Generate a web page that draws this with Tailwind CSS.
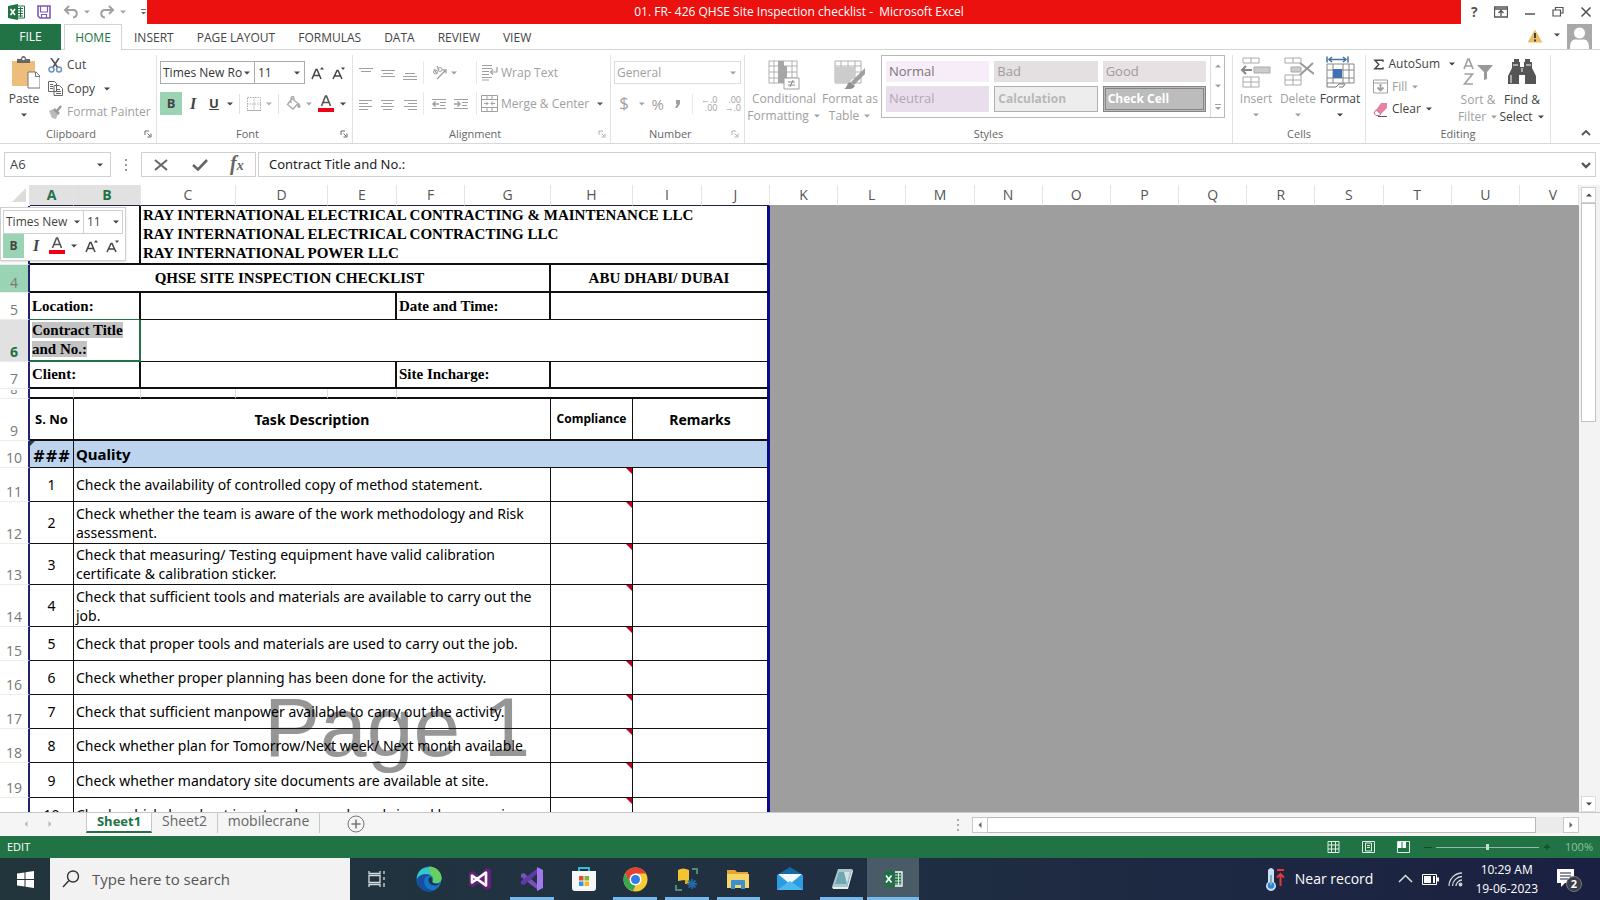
<!DOCTYPE html>
<html lang="en">
<head>
    <meta charset="UTF-8">
    <meta name="viewport" content="width=device-width, initial-scale=1.0">
    <title>01. FR- 426 QHSE Site Inspection checklist - Microsoft Excel</title>
    <script src="https://cdn.jsdelivr.net/npm/@tailwindcss/browser@4"></script>
</head>
<body class="h-screen flex flex-col overflow-hidden bg-white font-['Open_Sans','Noto_Sans',sans-serif] text-xs text-[#444]">

    <!-- Shared icon shapes -->
    <svg class="hidden">
        <symbol id="arrow" viewBox="0 0 8 8"><path d="M1 2.5h6L4 5.5z" fill="currentColor"/></symbol>
        <symbol id="launcher" viewBox="0 0 8 8"><path d="M1 5V1h4M3.5 3.5L6 6M7 3.5V7H3.5" fill="none" stroke="currentColor"/></symbol>
        <symbol id="grow" viewBox="0 0 16 16"><path d="M2 14L6 4.500h1L11 14M3.600 10.500h5.800" fill="none" stroke="currentColor" stroke-width="1.500"/><path d="M10 4.500L12 2l2 2.500z" fill="currentColor"/></symbol>
        <symbol id="shrink" viewBox="0 0 16 16"><path d="M2 14L6 5.500h1L11 14M3.600 11h5.800" fill="none" stroke="currentColor" stroke-width="1.500"/><path d="M10 2.500h4L12 5z" fill="currentColor"/></symbol>
        <symbol id="fontcolor" viewBox="0 0 18 18"><path d="M4.500 11L8.500 1h1L13.500 11M6 7.500h6" fill="none" stroke="#555" stroke-width="1.600"/><path d="M1 13h16v4H1z" fill="#f00014"/></symbol>
    </svg>

    <!-- Title bar -->
    <header class="flex h-6 shrink-0">
        <div class="flex w-[147px] items-center pl-2 text-[#a0a0a0]">
            <svg class="mr-3 h-4 w-[17px]" viewBox="0 0 17 16"><path d="M8 2h8.500v12H8z" fill="#fff" stroke="#217346"/><path d="M10 4.500h5M10 7h5M10 9.500h5M10 12h5M12.500 3v10" stroke="#217346"/><path d="M0 2l10-2v16L0 14z" fill="#217346"/><path d="M2.500 5l4.500 6M7 5l-4.500 6" stroke="#fff" stroke-width="1.600"/></svg>
            <button aria-label="Save"><svg class="size-[14px]" viewBox="0 0 14 14"><path d="M1 1h12v12H3l-2-2z" fill="#fff" stroke="#7d5ab5" stroke-width="1.600"/><path d="M3.500 1v6h7V1M4.500 13V9.500h5V13" fill="none" stroke="#7d5ab5" stroke-width="1.200"/></svg></button>
            <button class="ml-3 flex items-center gap-1" aria-label="Undo"><svg class="size-4" viewBox="0 0 16 16"><path d="M6 2L2 6l4 4M2.500 6H10c5 0 5 7 0 7.500" fill="none" stroke="currentColor" stroke-width="2"/></svg><svg class="size-2"><use href="#arrow"/></svg></button>
            <button class="ml-2 flex items-center gap-1" aria-label="Redo"><svg class="size-4" viewBox="0 0 16 16"><path d="M10 2l4 4-4 4M13.500 6H6c-5 0-5 7 0 7.500" fill="none" stroke="currentColor" stroke-width="2"/></svg><svg class="size-2"><use href="#arrow"/></svg></button>
            <button class="ml-3 text-[#666]" aria-label="Customize toolbar"><svg class="size-2" viewBox="0 0 8 8"><path d="M2 1.500h5" stroke="currentColor"/><path d="M2 4h5L4.500 6.500z" fill="currentColor"/></svg></button>
        </div>
        <h1 class="flex flex-1 items-center justify-center whitespace-pre bg-[#ea110f] pr-[10px] text-xs text-white">01. FR- 426 QHSE Site Inspection checklist -  Microsoft Excel</h1>
        <div class="flex w-[139px] items-center justify-between pr-2 pl-[10px] text-[#555]">
            <button class="text-sm font-bold" aria-label="Help">?</button>
            <button aria-label="Ribbon options"><svg class="h-3 w-[14px]" viewBox="0 0 14 12" fill="none" stroke="currentColor"><path d="M.5 1h13v10H.5zM.5 3h13M7 10V5M4.500 7L7 4.500 9.500 7" stroke-width="1.300"/></svg></button>
            <button aria-label="Minimize"><svg class="size-3" viewBox="0 0 12 12"><path d="M1 8h10" stroke="currentColor" stroke-width="1.500"/></svg></button>
            <button aria-label="Restore"><svg class="size-3" viewBox="0 0 12 12" fill="none" stroke="currentColor" stroke-width="1.200"><path d="M1 4h7.500v6H1zM3.500 4V1.500H11V7H8.500"/></svg></button>
            <button aria-label="Close"><svg class="size-3" viewBox="0 0 12 12"><path d="M1.500 1.500l9 9M10.500 1.500l-9 9" stroke="currentColor" stroke-width="1.600"/></svg></button>
        </div>
    </header>

    <!-- Ribbon tabs -->
    <nav class="flex h-[26px] shrink-0 border-b border-[#d4d4d4]">
        <button class="h-[26px] w-[61px] bg-[#217346] text-white">FILE</button>
        <button class="ml-[3px] h-[26px] w-[58px] border-x border-t border-[#d4d4d4] bg-white text-[#217346]">HOME</button>
        <button class="pt-[2px] pl-3 pr-[11px]">INSERT</button>
        <button class="pt-[2px] pl-3 pr-[11px]">PAGE LAYOUT</button>
        <button class="pt-[2px] pl-3 pr-[11px]">FORMULAS</button>
        <button class="pt-[2px] pl-3 pr-[11px]">DATA</button>
        <button class="pt-[2px] pl-3 pr-[11px]">REVIEW</button>
        <button class="pt-[2px] pl-3 pr-[11px]">VIEW</button>
        <div class="ml-auto flex items-end gap-[6px] pr-2">
            <svg class="mr-1 mb-[6px] h-[14px] w-4" viewBox="0 0 16 14"><path d="M8 .5L15.500 13.500H.5z" fill="#edbd66"/><path d="M8 4v5M8 10.500v2" stroke="#333" stroke-width="1.800"/></svg>
            <svg class="mb-[10px] size-2"><use href="#arrow"/></svg>
            <svg class="h-[25px] w-[25px]" viewBox="0 0 25 25"><path d="M0 0h25v25H0z" fill="#a9a9a9"/><path d="M3 25c0-6 1-9 5-9.500h9c4 .5 5 3.500 5 9.500z" fill="#fff"/><circle cx="12.500" cy="9" r="6" fill="#fff" stroke="#a9a9a9"/></svg>
        </div>
    </nav>

    <!-- Ribbon -->
    <section class="flex h-[94px] shrink-0 border-b border-[#d8d8d8] pt-[5px]">
        <!-- Clipboard -->
        <div class="flex w-[157px] flex-col border-r border-[#e2e2e2]">
            <div class="flex h-[70px]">
                <button class="flex w-[48px] flex-col items-center">
                    <svg class="h-9 w-8" viewBox="0 0 32 36"><path d="M4 6h23v25H4z" fill="#edbe7b"/><path d="M9 8V4h4c0-4 5-4 5 0h4v4z" fill="#666"/><circle cx="15.500" cy="4" r="1.300" fill="#fff"/><path d="M20 17h8l4 4v12H20z" fill="#fff" stroke="#777"/><path d="M27.500 17v4.500H32" fill="none" stroke="#777"/></svg>
                    <span class="leading-4">Paste</span>
                    <svg class="mt-1 size-2"><use href="#arrow"/></svg>
                </button>
                <div class="flex flex-col justify-between pb-[3px]">
                    <button class="flex h-5 items-center gap-1"><svg class="size-[15px]" viewBox="0 0 15 15" fill="none"><path d="M3 0l7 10M11 0L4.500 10" stroke="#555" stroke-width="1.600"/><circle cx="3.500" cy="11.500" r="2.500" stroke="#6f93c4" stroke-width="1.500"/><circle cx="11" cy="11.500" r="2.500" stroke="#6f93c4" stroke-width="1.500"/></svg>Cut</button>
                    <button class="flex h-5 items-center gap-1"><svg class="size-[15px]" viewBox="0 0 15 15" fill="#fff" stroke="#666"><path d="M.5.5h6l2 2v8h-8zM6 4.500h5.500l3 3v7H6z"/><path d="M2 3.500h3M2 5.500h3M2 7.500h3M8 8.500h4M8 10.500h5M8 12.500h5"/></svg>Copy<svg class="ml-1 size-2"><use href="#arrow"/></svg></button>
                    <button class="flex h-5 items-center gap-1 whitespace-nowrap text-[#a0a0a0]"><svg class="size-[15px]" viewBox="0 0 15 15"><path d="M1 6l4-2 5 5-2 5-4-1z" fill="#bbb"/><path d="M6 4l5 5M9 6l4-5" stroke="#999" stroke-width="2.500"/></svg>Format Painter</button>
                </div>
            </div>
            <div class="flex h-[18px] items-center justify-between pr-1 pl-[46px] text-[11px] text-[#666]">Clipboard<svg class="size-2"><use href="#launcher"/></svg></div>
        </div>
        <!-- Font -->
        <div class="flex w-[196px] flex-col border-r border-[#e2e2e2] pl-[3px]">
            <div class="flex h-[70px] flex-col gap-2 pt-[6px]">
                <div class="flex h-[23px] items-center">
                    <label class="relative flex h-full w-[95px] items-center border border-[#ababab]"><select aria-label="Font" class="w-full appearance-none pl-[2px] text-xs text-[#333]"><option>Times New Ro</option></select><svg class="absolute right-[3px] size-2"><use href="#arrow"/></svg></label>
                    <label class="relative flex h-full w-[50px] items-center border border-l-0 border-[#ababab]"><select aria-label="Font size" class="w-full appearance-none pl-[3px] text-xs text-[#333]"><option>11</option></select><svg class="absolute right-[3px] size-2"><use href="#arrow"/></svg></label>
                    <button class="ml-[5px]" aria-label="Grow font"><svg class="size-4"><use href="#grow"/></svg></button>
                    <button class="ml-[5px]" aria-label="Shrink font"><svg class="size-4"><use href="#shrink"/></svg></button>
                </div>
                <div class="flex h-[23px] items-center">
                    <button class="h-full w-[22px] bg-[#9bd4b4] text-[13px] font-bold">B</button>
                    <button class="w-[22px] font-['Liberation_Serif',serif] text-base font-bold italic">I</button>
                    <button class="w-5 text-[13px] font-bold underline">U</button>
                    <svg class="ml-[2px] size-2"><use href="#arrow"/></svg>
                    <span class="ml-[5px] h-5 w-px bg-[#e0e0e0]"></span>
                    <button class="ml-[7px] flex items-center gap-1 text-[#b0b0b0]" aria-label="Borders"><svg class="size-[14px]" viewBox="0 0 14 14" fill="none" stroke="currentColor"><path d="M.5.5h13v13H.5zM7 0v14M0 7h14" stroke-dasharray="1.500 1"/><path d="M0 13.500h14"/></svg><svg class="size-2"><use href="#arrow"/></svg></button>
                    <span class="ml-[5px] h-5 w-px bg-[#e0e0e0]"></span>
                    <button class="ml-[7px] flex items-center gap-1 text-[#a8a8a8]" aria-label="Fill color"><svg class="size-[15px]" viewBox="0 0 15 15" fill="none" stroke="currentColor"><path d="M6 2.500l6 5-5 5.500-5.500-4.500zM5 7V2c0-2 3-2 3 0v3" stroke-width="1.300"/><path d="M12.500 7c2 3 2 4.500.5 4.500s-1.500-1.500-.5-4.500z" fill="currentColor"/></svg><svg class="size-2"><use href="#arrow"/></svg></button>
                    <button class="ml-1 flex items-center gap-1" aria-label="Font color"><svg class="size-[18px]"><use href="#fontcolor"/></svg><svg class="size-2"><use href="#arrow"/></svg></button>
                </div>
            </div>
            <div class="flex h-[18px] items-center justify-between pr-1 pl-[76px] text-[11px] text-[#666]">Font<svg class="size-2"><use href="#launcher"/></svg></div>
        </div>
        <!-- Alignment -->
        <div class="flex w-[258px] flex-col border-r border-[#e2e2e2] pl-[6px] text-[#a0a0a0]">
            <div class="grid h-[70px] grid-cols-[65px_53px_1fr] content-start gap-y-2 pt-[6px]">
                <div class="flex h-[23px] items-center gap-2 border-r border-[#e8e8e8]">
                    <button aria-label="Top align"><svg class="size-[14px]" viewBox="0 0 14 14" stroke="currentColor"><path d="M0 2.500h14M2 5.500h10"/></svg></button>
                    <button aria-label="Middle align"><svg class="size-[14px]" viewBox="0 0 14 14" stroke="currentColor"><path d="M0 4.500h14M2 7.500h10M0 10.500h14"/></svg></button>
                    <button aria-label="Bottom align"><svg class="size-[14px]" viewBox="0 0 14 14" stroke="currentColor"><path d="M2 7.500h10M0 10.500h14M0 13.500h14"/></svg></button>
                </div>
                <div class="flex items-center gap-[2px] border-r border-[#e8e8e8] pl-2">
                    <button aria-label="Orientation"><svg class="size-4" viewBox="0 0 16 16" fill="none" stroke="currentColor"><circle cx="3.500" cy="7" r="2"/><circle cx="8" cy="4.500" r="2"/><path d="M5 9L2 4M7 5L5 1M5 14l9-9M10.500 5H14v3.500" stroke-width="1.300"/></svg></button><svg class="size-2"><use href="#arrow"/></svg>
                </div>
                <button class="flex items-center gap-[3px] pl-[4px]"><svg class="size-[17px]" viewBox="0 0 17 17" fill="none" stroke="currentColor"><path d="M1 1.500h10M1 4.500h10M1 7.500h7M1 10.500h7M1 13.500h10M1 16h7M16 3v5H9.500M12 5.500L9.500 8l2.500 2.500" stroke-width="1.200"/></svg>Wrap Text</button>
                <div class="flex h-[23px] items-center gap-2 border-r border-[#e8e8e8]">
                    <button aria-label="Align left"><svg class="size-[14px]" viewBox="0 0 14 14" stroke="currentColor"><path d="M0 3.500h13M0 6.500h9M0 9.500h13M0 12.500h9"/></svg></button>
                    <button aria-label="Center"><svg class="size-[14px]" viewBox="0 0 14 14" stroke="currentColor"><path d="M0 3.500h13M2 6.500h9M0 9.500h13M2 12.500h9"/></svg></button>
                    <button aria-label="Align right"><svg class="size-[14px]" viewBox="0 0 14 14" stroke="currentColor"><path d="M1 3.500h13M5 6.500h9M1 9.500h13M5 12.500h9"/></svg></button>
                </div>
                <div class="flex items-center gap-[6px] border-r border-[#e8e8e8] pl-[7px]">
                    <button aria-label="Decrease indent"><svg class="size-4" viewBox="0 0 16 16" fill="none" stroke="currentColor"><path d="M1 3.500h14M9 6.500h6M9 9.500h5M1 12.500h14"/><path d="M8 8H2M4.500 5.500L2 8l2.500 2.500" stroke-width="1.500"/></svg></button>
                    <button aria-label="Increase indent"><svg class="size-4" viewBox="0 0 16 16" fill="none" stroke="currentColor"><path d="M1 3.500h14M9 6.500h6M9 9.500h5M1 12.500h14"/><path d="M1 8h6M4.500 5.500L7 8l-2.500 2.500" stroke-width="1.500"/></svg></button>
                </div>
                <button class="flex items-center gap-[3px] whitespace-nowrap pl-[4px]"><svg class="size-[17px]" viewBox="0 0 17 17" fill="none" stroke="currentColor"><path d="M.5.5h16v16H.5zM.5 4.500h16M.5 12.500h16M6 0v4.500M11 0v4.500M6 12.500V17M11 12.500V17M3 8.500h4M10 8.500h4M5 6.500l2 2-2 2M12 6.500l-2 2 2 2"/></svg>Merge &amp; Center<svg class="ml-1 size-2 text-[#555]"><use href="#arrow"/></svg></button>
            </div>
            <div class="flex h-[18px] items-center justify-between pr-1 pl-[90px] text-[11px] text-[#666]">Alignment<svg class="size-2 text-[#b0b0b0]"><use href="#launcher"/></svg></div>
        </div>
        <!-- Number -->
        <div class="flex w-[134px] flex-col border-r border-[#e2e2e2] px-[3px] text-[#a0a0a0]">
            <div class="flex h-[70px] flex-col gap-2 pt-[6px]">
                <label class="relative flex h-[23px] items-center border border-[#dcdcdc]"><select aria-label="Number format" class="w-full appearance-none pl-[2px] text-xs"><option>General</option></select><svg class="absolute right-[3px] size-2"><use href="#arrow"/></svg></label>
                <div class="flex h-[23px] items-center">
                    <button class="w-[21px] text-[17px]">$</button><svg class="ml-1 size-2"><use href="#arrow"/></svg>
                    <button class="ml-[6px] text-[15px]">%</button>
                    <button class="ml-[10px]" aria-label="Comma style"><svg class="h-3 w-2" viewBox="0 0 8 12"><path d="M2 2h4v4L3 10H1l2-4H2z" fill="currentColor"/></svg></button>
                    <span class="ml-[10px] h-5 w-px bg-[#e8e8e8]"></span>
                    <button class="ml-2 text-right text-[9px] leading-[8px]"><b>←</b>.0<br>.00</button>
                    <button class="ml-[7px] text-right text-[9px] leading-[8px]">.00<br><b>→</b>.0</button>
                </div>
            </div>
            <div class="flex h-[18px] items-center justify-between pr-[2px] pl-[35px] text-[11px] text-[#666]">Number<svg class="size-2 text-[#b0b0b0]"><use href="#launcher"/></svg></div>
        </div>
        <!-- Styles -->
        <div class="flex w-[488px] flex-col border-r border-[#e2e2e2] text-[#a0a0a0]">
            <div class="flex h-[70px]">
                <button class="flex w-[74px] flex-col items-center pt-[5px] pl-1 leading-[17px]">
                    <svg class="h-[30px] w-8 shrink-0" viewBox="0 0 32 30"><path d="M1 1h28v22H1zM1 6h28M1 12h28M1 18h28M6 1v22M24 1v22" fill="#fff" stroke="#b0b0b0"/><path d="M10 1h6v22h-6zM16 6h3v14h-3z" fill="#a6a6a6"/><path d="M16 18h15v11H16z" fill="#fff" stroke="#a0a0a0"/><path d="M20 22h7M20 25h7M25 20l-3 7" stroke="#888"/></svg>
                    <span>Conditional</span><span class="flex items-center gap-1">Formatting<svg class="size-2"><use href="#arrow"/></svg></span>
                </button>
                <button class="flex w-[62px] flex-col items-center whitespace-nowrap pt-[5px] leading-[17px]">
                    <svg class="h-[30px] w-8 shrink-0" viewBox="0 0 32 30"><path d="M1 1h26v22H1zM1 6h26M1 12h26M1 18h26M7 1v22M14 1v22M21 1v22" fill="#fff" stroke="#b0b0b0"/><path d="M1 7h20v9l-6 7H1z" fill="#ccc"/><path d="M31 8v6L20 25l-3-3z" fill="#a0a0a0"/><path d="M16 22l5 4c-2 4-7 3-11 3 3-1 3-6 6-7z" fill="#909090"/></svg>
                    <span>Format as</span><span class="flex items-center gap-1">Table<svg class="size-2"><use href="#arrow"/></svg></span>
                </button>
                <div class="flex h-[63px] w-[344px] border border-[#b8b8b8]">
                    <div class="grid flex-1 grid-cols-3 gap-x-[5px] gap-y-[4px] px-1 py-[5px] text-[13px]">
                        <button class="bg-[#f6edf8] pl-[3px] text-left text-[#777]">Normal</button>
                        <button class="bg-[#e4dfe1] pl-[3px] text-left text-[#a29a9c]">Bad</button>
                        <button class="bg-[#e7e1e3] pl-[3px] text-left text-[#a29a9c]">Good</button>
                        <button class="bg-[#e9dfec] pl-[3px] text-left text-[#b3a6b6]">Neutral</button>
                        <button class="border border-[#b0b0b0] bg-[#ededed] pl-[3px] text-left text-xs font-bold text-[#b8b8b8]">Calculation</button>
                        <button class="border-3 border-double border-[#858585] bg-[#bcbcbc] pl-[2px] text-left text-xs font-bold leading-4 text-white">Check Cell</button>
                    </div>
                    <div class="flex w-[14px] flex-col items-center justify-around border-l border-[#dcdcdc]"><svg class="size-2 rotate-180"><use href="#arrow"/></svg><svg class="size-2"><use href="#arrow"/></svg><svg class="size-2" viewBox="0 0 8 8"><path d="M1 1.500h6" stroke="currentColor"/><path d="M1 4h6L4 7z" fill="currentColor"/></svg></div>
                </div>
            </div>
            <div class="flex h-[18px] items-center justify-center text-[11px] text-[#666]">Styles</div>
        </div>
        <!-- Cells -->
        <div class="flex w-[133px] flex-col border-r border-[#e2e2e2] text-[#a0a0a0]">
            <div class="grid h-[70px] grid-cols-[42px_42px_42px] pl-[2px]">
                <button class="flex flex-col items-center"><svg class="h-9 w-8" viewBox="0 0 32 36" fill="none" stroke="#aaa"><path d="M3 3h16v5H3zM11 3v5M3 22h16v10H3zM11 22v10M3 27h16"/><path d="M14 12h16v6H14z" fill="#ccc"/><path d="M12 15H2M6 11l-4 4 4 4" stroke="#888" stroke-width="2"/></svg><span class="leading-4">Insert</span><svg class="mt-1 size-2"><use href="#arrow"/></svg></button>
                <button class="flex flex-col items-center"><svg class="h-9 w-8" viewBox="0 0 32 36" fill="none" stroke="#aaa"><path d="M3 3h16v5H3zM11 3v5M3 20h16v10H3zM11 20v10M3 25h16"/><path d="M9 12h10v5H9z" fill="#ccc"/><path d="M18 8l14 11M31 8L18 20" stroke="#999" stroke-width="2"/></svg><span class="leading-4">Delete</span><svg class="mt-1 size-2"><use href="#arrow"/></svg></button>
                <button class="flex flex-col items-center text-[#444]"><svg class="h-9 w-8" viewBox="0 0 32 36" fill="none" stroke="#888"><path d="M3 9h27v19H3zM3 15h27M3 23h27M9 9v19M19 9v19M25 9v19"/><path d="M9 14h9v9H9z" fill="#3e72b4" stroke="none"/><path d="M3 1.500v6M24 1.500v6M5 4.500h17M8 2L5 4.500 8 7M19 2l3 2.500L19 7" stroke="#41719c" stroke-width="1.500"/><path d="M3 28v4h9l3-3h6l-2 3h-4" stroke="#777"/></svg><span class="leading-4">Format</span><svg class="mt-1 size-2"><use href="#arrow"/></svg></button>
            </div>
            <div class="flex h-[18px] items-center justify-center text-[11px] text-[#666]">Cells</div>
        </div>
        <!-- Editing -->
        <div class="flex w-[185px] flex-col border-r border-[#e2e2e2]">
            <div class="flex h-[70px]">
                <div class="flex w-[90px] flex-col justify-between pb-[7px] pl-[7px]">
                    <button class="flex h-[18px] items-center gap-1"><svg class="size-[15px]" viewBox="0 0 15 15"><path d="M13 4V2H2.500l5 5.500-5 5.500H13v-2" fill="none" stroke="#444" stroke-width="1.900"/></svg>AutoSum<svg class="ml-1 size-2 shrink-0"><use href="#arrow"/></svg></button>
                    <button class="flex h-[18px] items-center gap-1 text-[#a0a0a0]"><svg class="size-[15px]" viewBox="0 0 15 15" fill="none" stroke="currentColor"><path d="M.5 1h14v13H.5zM.5 4h14"/><path d="M7.500 5v6M4.500 8.500l3 3 3-3" stroke-width="1.800"/></svg>Fill<svg class="size-2"><use href="#arrow"/></svg></button>
                    <button class="flex h-[18px] items-center gap-1"><svg class="size-[15px]" viewBox="0 0 15 15"><path d="M8 1h6v5l-6 6-5-4z" fill="#e683a5"/><path d="M3 8l5 4-2 1.500H3L1 11z" fill="#fff" stroke="#c67"/><path d="M5 14.500h9" stroke="#555"/></svg>Clear<svg class="size-2"><use href="#arrow"/></svg></button>
                </div>
                <button class="flex w-[44px] flex-col items-center whitespace-nowrap leading-[17px] text-[#a0a0a0]">
                    <svg class="h-9 w-8" viewBox="0 0 32 36" fill="none" stroke="currentColor" stroke-width="1.700"><path d="M2 14L6 4h1l4 10M3.500 11h6M2.500 19h8L2.500 29h8.500"/><path d="M15 10h16l-6 7v7l-3 1v-8z" fill="#999" stroke="none"/></svg>
                    <span>Sort &amp;</span><span class="flex items-center gap-1">Filter<svg class="size-2"><use href="#arrow"/></svg></span>
                </button>
                <button class="flex w-[44px] flex-col items-center whitespace-nowrap leading-[17px]">
                    <svg class="h-9 w-8" viewBox="0 0 32 36" fill="#555"><path d="M8 4h5v3h1v5h4V7h1V4h5v3h2v6l4 8v8H19v-9h-6v9H2v-8l4-8V7h2z"/><path d="M7 10h5M20 10h5M5 20v8M16 13v4" stroke="#fff" stroke-width="1"/></svg>
                    <span>Find &amp;</span><span class="flex items-center gap-1">Select<svg class="size-2"><use href="#arrow"/></svg></span>
                </button>
            </div>
            <div class="flex h-[18px] items-center justify-center text-[11px] text-[#666]">Editing</div>
        </div>
        <button class="ml-auto self-end pr-2 pb-1" aria-label="Collapse ribbon"><svg class="size-3" viewBox="0 0 12 12"><path d="M2 8l4-4 4 4" fill="none" stroke="#555" stroke-width="1.800"/></svg></button>
    </section>

    <!-- Formula bar -->
    <section class="flex h-[41px] shrink-0 items-start pt-2 pr-1 pl-1">
        <label class="relative flex h-[25px] w-[107px] items-center border border-[#d0d0d0]"><input aria-label="Name box" value="A6" class="w-full pl-[5px] text-[13px]"><svg class="absolute right-[6px] size-2"><use href="#arrow"/></svg></label>
        <svg class="mx-[11px] h-[25px] w-2" viewBox="0 0 8 25" fill="#999"><path d="M3 7h2v2H3zM3 12h2v2H3zM3 17h2v2H3z"/></svg>
        <div class="flex h-[25px] w-[115px] items-center justify-around border border-[#d0d0d0] text-[#666]">
            <button aria-label="Cancel"><svg class="h-3 w-4" viewBox="0 0 16 12"><path d="M2 1l12 10M14 1L2 11" stroke="currentColor" stroke-width="2"/></svg></button>
            <button aria-label="Enter"><svg class="h-3 w-4" viewBox="0 0 16 12"><path d="M1 6l5 4.500L15 1" fill="none" stroke="currentColor" stroke-width="2.600"/></svg></button>
            <button class="font-['Liberation_Serif',serif] text-xl font-bold italic leading-none">f<span class="text-sm">x</span></button>
        </div>
        <label class="relative ml-[2px] flex h-[25px] flex-1 items-center border border-[#d0d0d0]"><input aria-label="Formula" value="Contract Title and No.:" class="w-full pl-[10px] font-['Noto_Sans',sans-serif] text-[13px] text-[#222]"><svg class="absolute right-[3px] size-3" viewBox="0 0 12 12"><path d="M2 4l4 4 4-4" fill="none" stroke="#555" stroke-width="2.400"/></svg></label>
    </section>

    <!-- Worksheet -->
    <main class="flex min-h-0 flex-1">
        <div class="relative isolate min-w-0 flex-1 overflow-hidden bg-white">
            <div class="absolute top-[494px] left-[264px] -z-10 font-['Liberation_Sans',sans-serif] text-[84px] leading-[96px] text-[#969696]" aria-hidden="true">Page 1</div>
            <table class="w-full table-fixed border-separate border-spacing-0 font-['Noto_Sans',sans-serif] text-sm leading-[19px] text-black">
                <colgroup>
                    <col class="w-[30px]"><col class="w-[44px]"><col class="w-[67px]"><col class="w-[95px]"><col class="w-[92px]"><col class="w-[69px]"><col class="w-[68px]"><col class="w-[86px]"><col class="w-[82px]"><col class="w-[69px]"><col class="w-[68px]">
                    <col><col><col><col><col><col><col><col><col><col><col><col class="w-[59px]">
                </colgroup>
                <thead class="font-['Open_Sans',sans-serif] text-sm text-[#555]">
                    <tr class="h-5 [&>th]:border-r [&>th]:border-b [&>th]:border-r-[#e4e4e4] [&>th]:border-b-[#22224e] [&>th]:p-0 [&>th]:font-normal">
                        <th class="border-b-transparent!"><svg class="ml-3 h-4 w-[14px]" viewBox="0 0 14 16"><path d="M14 1v14H0z" fill="#dcdcdc"/></svg></th>
                        <th class="border-b-2 bg-[#e0e1e0] font-bold! text-[#217346]">A</th>
                        <th class="border-b-2 bg-[#e0e1e0] font-bold! text-[#217346]">B</th>
                        <th>C</th><th>D</th><th>E</th><th>F</th><th>G</th><th>H</th><th>I</th><th>J</th>
                        <th class="border-b-[#9e9e9e]!">K</th><th class="border-b-[#9e9e9e]!">L</th><th class="border-b-[#9e9e9e]!">M</th><th class="border-b-[#9e9e9e]!">N</th><th class="border-b-[#9e9e9e]!">O</th><th class="border-b-[#9e9e9e]!">P</th><th class="border-b-[#9e9e9e]!">Q</th><th class="border-b-[#9e9e9e]!">R</th><th class="border-b-[#9e9e9e]!">S</th><th class="border-b-[#9e9e9e]!">T</th><th class="border-b-[#9e9e9e]!">U</th><th class="border-b-[#9e9e9e]! pl-2!">V</th>
                    </tr>
                </thead>
                <tbody class="[&_td]:border-[#111] [&_td]:p-0 [&_th]:border-r-2 [&_th]:border-b [&_th]:border-r-[#22226e] [&_th]:border-b-[#ececec] [&_th]:p-0 [&_th]:align-bottom [&_th]:font-['Open_Sans',sans-serif] [&_th]:text-sm [&_th]:font-normal [&_th]:leading-[18px] [&_th]:text-[#777]">
                    <tr class="h-[59px] font-['Liberation_Serif',serif] text-[15px] font-bold">
                        <th></th>
                        <td colspan="2" class="border-r-2 border-b-2"></td>
                        <td colspan="8" class="border-b-2 border-r-3 border-r-[#0a0a8c]! pl-[2px]!">RAY INTERNATIONAL ELECTRICAL CONTRACTING &amp; MAINTENANCE LLC<br>RAY INTERNATIONAL ELECTRICAL CONTRACTING LLC<br>RAY INTERNATIONAL POWER LLC</td>
                        <td colspan="12" rowspan="16" class="bg-[#9e9e9e]"></td>
                    </tr>
                    <tr class="h-7 font-['Liberation_Serif',serif] text-[15px] font-bold">
                        <th class="bg-[#9bd4b4]">4</th>
                        <td colspan="7" class="border-r-2 border-b-2 text-center">QHSE SITE INSPECTION CHECKLIST</td>
                        <td colspan="3" class="border-b-2 border-r-3 border-r-[#0a0a8c]! text-center">ABU DHABI/ DUBAI</td>
                    </tr>
                    <tr class="h-[27px] font-['Liberation_Serif',serif] text-[15px] font-bold">
                        <th>5</th>
                        <td colspan="2" class="border-r-2 border-b border-b-[#217346]! pl-[2px]!">Location:</td>
                        <td colspan="3" class="border-r-2 border-b"></td>
                        <td colspan="2" class="border-r-2 border-b pl-[2px]!">Date and Time:</td>
                        <td colspan="3" class="border-b border-r-3 border-r-[#0a0a8c]!"></td>
                    </tr>
                    <tr class="h-[42px] font-['Liberation_Serif',serif] text-[15px] font-bold">
                        <th class="bg-[#e0e1e0] font-bold! text-[#217346]!">6</th>
                        <td colspan="2" class="border-r-2 border-b-2 border-[#217346]! pl-[2px]!"><span class="bg-[#c3c3c3]">Contract Title </span><br><span class="bg-[#c3c3c3]">and No.:</span></td>
                        <td colspan="8" class="border-b border-r-3 border-r-[#0a0a8c]!"></td>
                    </tr>
                    <tr class="h-[27px] font-['Liberation_Serif',serif] text-[15px] font-bold">
                        <th>7</th>
                        <td colspan="2" class="border-r-2 border-b-2 pl-[2px]!">Client:</td>
                        <td colspan="3" class="border-r-2 border-b-2"></td>
                        <td colspan="2" class="border-r-2 border-b-2 pl-[2px]!">Site Incharge:</td>
                        <td colspan="3" class="border-b-2 border-r-3 border-r-[#0a0a8c]!"></td>
                    </tr>
                    <tr class="h-[10px]">
                        <th><div class="flex h-2 items-end justify-center overflow-hidden text-xs">8</div></th>
                        <td class="border-r border-b-2 border-r-[#e0e0e0]!"></td><td class="border-r border-b-2 border-r-[#e0e0e0]!"></td><td class="border-r border-b-2 border-r-[#e0e0e0]!"></td><td class="border-r border-b-2 border-r-[#e0e0e0]!"></td><td class="border-r border-b-2 border-r-[#e0e0e0]!"></td><td class="border-b-2"></td>
                        <td class="border-b-2"></td><td class="border-b-2"></td><td class="border-b-2"></td>
                        <td class="border-b-2 border-r-3 border-r-[#0a0a8c]!"></td>
                    </tr>
                    <tr class="h-[42px] text-center font-bold">
                        <th>9</th>
                        <td class="border-r border-b-2 text-[13px]">S. No</td>
                        <td colspan="6" class="border-r border-b-2">Task Description</td>
                        <td class="border-r border-b-2 text-xs">Compliance</td>
                        <td colspan="2" class="border-b-2 border-r-3 border-r-[#0a0a8c]!">Remarks</td>
                    </tr>
                    <tr class="h-[27px] bg-[#bdd4ee] font-bold">
                        <th class="bg-white">10</th>
                        <td class="relative border-r border-b pt-[6px]! text-center font-['DejaVu_Sans',sans-serif] text-[15px]"><svg class="absolute top-0 left-0 size-[5px]" viewBox="0 0 5 5"><path d="M0 0h5L0 5z" fill="#1c4a3c"/></svg>###</td>
                        <td colspan="9" class="border-b border-r-3 border-r-[#0a0a8c]! pl-[2px]! text-[15px]">Quality</td>
                    </tr>
                    <tr class="h-[34px]">
                        <th>11</th><td class="border-r border-b text-center">1</td>
                        <td colspan="6" class="border-r border-b pl-[2px]!">Check the availability of controlled copy of method statement.</td>
                        <td class="relative border-r border-b"><svg class="absolute top-0 right-0 size-[6px]" viewBox="0 0 6 6"><path d="M0 0h6v6z" fill="#c00020"/></svg></td>
                        <td colspan="2" class="border-b border-r-3 border-r-[#0a0a8c]!"></td>
                    </tr>
                    <tr class="h-[42px]">
                        <th>12</th><td class="border-r border-b text-center">2</td>
                        <td colspan="6" class="border-r border-b pl-[2px]!">Check whether the team is aware of the work methodology and Risk<br>assessment.</td>
                        <td class="relative border-r border-b"><svg class="absolute top-0 right-0 size-[6px]" viewBox="0 0 6 6"><path d="M0 0h6v6z" fill="#c00020"/></svg></td>
                        <td colspan="2" class="border-b border-r-3 border-r-[#0a0a8c]!"></td>
                    </tr>
                    <tr class="h-[41px]">
                        <th>13</th><td class="border-r border-b text-center">3</td>
                        <td colspan="6" class="border-r border-b pl-[2px]!">Check that measuring/ Testing equipment have valid calibration<br>certificate &amp; calibration sticker.</td>
                        <td class="relative border-r border-b"><svg class="absolute top-0 right-0 size-[6px]" viewBox="0 0 6 6"><path d="M0 0h6v6z" fill="#c00020"/></svg></td>
                        <td colspan="2" class="border-b border-r-3 border-r-[#0a0a8c]!"></td>
                    </tr>
                    <tr class="h-[42px]">
                        <th>14</th><td class="border-r border-b text-center">4</td>
                        <td colspan="6" class="border-r border-b pl-[2px]!">Check that sufficient tools and materials are available to carry out the<br>job.</td>
                        <td class="relative border-r border-b"><svg class="absolute top-0 right-0 size-[6px]" viewBox="0 0 6 6"><path d="M0 0h6v6z" fill="#c00020"/></svg></td>
                        <td colspan="2" class="border-b border-r-3 border-r-[#0a0a8c]!"></td>
                    </tr>
                    <tr class="h-[34px]">
                        <th>15</th><td class="border-r border-b text-center">5</td>
                        <td colspan="6" class="border-r border-b pl-[2px]!">Check that proper tools and materials are used to carry out the job.</td>
                        <td class="relative border-r border-b"><svg class="absolute top-0 right-0 size-[6px]" viewBox="0 0 6 6"><path d="M0 0h6v6z" fill="#c00020"/></svg></td>
                        <td colspan="2" class="border-b border-r-3 border-r-[#0a0a8c]!"></td>
                    </tr>
                    <tr class="h-[34px]">
                        <th>16</th><td class="border-r border-b text-center">6</td>
                        <td colspan="6" class="border-r border-b pl-[2px]!">Check whether proper planning has been done for the activity.</td>
                        <td class="relative border-r border-b"><svg class="absolute top-0 right-0 size-[6px]" viewBox="0 0 6 6"><path d="M0 0h6v6z" fill="#c00020"/></svg></td>
                        <td colspan="2" class="border-b border-r-3 border-r-[#0a0a8c]!"></td>
                    </tr>
                    <tr class="h-[34px]">
                        <th>17</th><td class="border-r border-b text-center">7</td>
                        <td colspan="6" class="border-r border-b pl-[2px]!">Check that sufficient manpower available to carry out the activity.</td>
                        <td class="relative border-r border-b"><svg class="absolute top-0 right-0 size-[6px]" viewBox="0 0 6 6"><path d="M0 0h6v6z" fill="#c00020"/></svg></td>
                        <td colspan="2" class="border-b border-r-3 border-r-[#0a0a8c]!"></td>
                    </tr>
                    <tr class="h-[34px]">
                        <th>18</th><td class="border-r border-b text-center">8</td>
                        <td colspan="6" class="border-r border-b pl-[2px]!">Check whether plan for Tomorrow/Next week/ Next month available</td>
                        <td class="relative border-r border-b"><svg class="absolute top-0 right-0 size-[6px]" viewBox="0 0 6 6"><path d="M0 0h6v6z" fill="#c00020"/></svg></td>
                        <td colspan="2" class="border-b border-r-3 border-r-[#0a0a8c]!"></td>
                    </tr>
                    <tr class="h-[35px]">
                        <th>19</th><td class="border-r border-b text-center">9</td>
                        <td colspan="6" class="border-r border-b pl-[2px]!">Check whether mandatory site documents are available at site.</td>
                        <td class="relative border-r border-b"><svg class="absolute top-0 right-0 size-[6px]" viewBox="0 0 6 6"><path d="M0 0h6v6z" fill="#c00020"/></svg></td>
                        <td colspan="2" class="border-b border-r-3 border-r-[#0a0a8c]!"></td>
                        <td colspan="12" rowspan="2" class="bg-[#9e9e9e]"></td>
                    </tr>
                    <tr class="h-[34px]">
                        <th>20</th><td class="border-r border-b text-center">10</td>
                        <td colspan="6" class="border-r border-b pl-[2px]!">Check vehicle log sheet is entered properly and signed by supervisors.</td>
                        <td class="relative border-r border-b"><svg class="absolute top-0 right-0 size-[6px]" viewBox="0 0 6 6"><path d="M0 0h6v6z" fill="#c00020"/></svg></td>
                        <td colspan="2" class="border-b border-r-3 border-r-[#0a0a8c]!"></td>
                    </tr>
                </tbody>
            </table>

            <!-- Mini toolbar over the top-left cells -->
            <div class="absolute top-[22px] left-0 h-[54px] w-[126px] border border-[#cfcfcf] bg-white p-[2px] shadow">
                <div class="flex h-6">
                    <label class="relative flex w-[81px] items-center border border-[#d0d0d0]"><select aria-label="Mini font" class="w-full appearance-none pl-[2px] text-xs"><option>Times New</option></select><svg class="absolute right-[2px] size-2"><use href="#arrow"/></svg></label>
                    <label class="relative flex flex-1 items-center border border-l-0 border-[#d0d0d0]"><select aria-label="Mini font size" class="w-full appearance-none pl-[3px] text-xs"><option>11</option></select><svg class="absolute right-[2px] size-2"><use href="#arrow"/></svg></label>
                </div>
                <div class="flex h-6 items-center">
                    <button class="h-full w-[21px] bg-[#9bd4b4] text-xs font-bold">B</button>
                    <button class="w-6 font-['Liberation_Serif',serif] text-base font-bold italic">I</button>
                    <button class="flex items-center gap-1" aria-label="Mini font color"><svg class="size-[18px]"><use href="#fontcolor"/></svg><svg class="size-2"><use href="#arrow"/></svg></button>
                    <button class="ml-[6px]" aria-label="Mini grow font"><svg class="size-4"><use href="#grow"/></svg></button>
                    <button class="ml-[5px]" aria-label="Mini shrink font"><svg class="size-4"><use href="#shrink"/></svg></button>
                </div>
            </div>
        </div>

        <!-- Vertical scroll bar -->
        <div class="flex w-[21px] flex-col bg-[#f3f3f3] pt-[2px] pr-1 pl-[2px]">
            <button class="flex h-4 items-center justify-center border border-[#cfcfcf] bg-white" aria-label="Scroll up"><svg class="size-2 rotate-180"><use href="#arrow"/></svg></button>
            <div class="h-[219px] border border-[#c4c4c4] bg-white"></div>
            <button class="mt-auto flex h-4 items-center justify-center border border-[#dcdcdc] bg-white" aria-label="Scroll down"><svg class="size-2"><use href="#arrow"/></svg></button>
        </div>
    </main>

    <!-- Sheet tabs -->
    <section class="flex h-6 shrink-0 items-start border-t border-[#c8c8c8] bg-[#f5f5f5] text-sm leading-4 text-[#666]">
        <div class="flex h-[21px] w-[86px] items-center gap-4 pl-[22px] text-[#b8b8b8]"><svg class="size-2 rotate-90"><use href="#arrow"/></svg><svg class="size-2 -rotate-90"><use href="#arrow"/></svg></div>
        <button class="h-5 w-[66px] border-x border-b-2 border-x-[#c8c8c8] border-b-[#217346] bg-white pb-[2px] text-[13px] font-bold text-[#217346]">Sheet1</button>
        <button class="h-5 w-[66px] border-r border-[#c8c8c8] pb-1">Sheet2</button>
        <button class="h-5 w-[102px] border-r border-[#c8c8c8] pb-1">mobilecrane</button>
        <button class="ml-[27px] pt-[2px]" aria-label="New sheet"><svg class="size-[18px]" viewBox="0 0 18 18" fill="none" stroke="#777"><circle cx="9" cy="9" r="8"/><path d="M9 4.500v9M4.500 9h9" stroke-width="1.600"/></svg></button>
        <div class="ml-auto flex h-full items-center pr-[21px]">
            <svg class="mr-3 h-4 w-1" viewBox="0 0 4 16" fill="#aaa"><path d="M1 2h2v2H1zM1 7h2v2H1zM1 12h2v2H1z"/></svg>
            <button class="flex size-4 items-center justify-center border border-[#c8c8c8] bg-white" aria-label="Scroll left"><svg class="size-2 rotate-90"><use href="#arrow"/></svg></button>
            <div class="h-4 w-[548px] border border-l-0 border-[#b8b8b8] bg-white"></div>
            <div class="h-4 w-[27px] bg-[#ebebeb]"></div>
            <button class="flex size-4 items-center justify-center border border-[#c8c8c8] bg-white" aria-label="Scroll right"><svg class="size-2 -rotate-90"><use href="#arrow"/></svg></button>
        </div>
    </section>

    <!-- Status bar -->
    <footer class="flex h-[22px] shrink-0 items-center bg-[#217346] pr-[7px] pl-[7px] text-[11px] text-white">
        <span>EDIT</span>
        <div class="ml-auto flex items-center">
            <button aria-label="Normal view"><svg class="h-3 w-[13px]" viewBox="0 0 13 12" fill="none" stroke="#dfeee5"><path d="M1 .5h11v11H1zM1 4h11M1 8h11M4.500 0v12M8.500 0v12"/></svg></button>
            <button class="ml-[22px]" aria-label="Page layout"><svg class="h-3 w-[13px]" viewBox="0 0 13 12" fill="none" stroke="#dfeee5"><path d="M.5.5h12v11H.5zM3.500 2v8h6V2zM5 4.500h3M5 6.500h3"/></svg></button>
            <button class="ml-[22px]" aria-label="Page break preview"><svg class="h-3 w-[13px]" viewBox="0 0 13 12" fill="none" stroke="#dfeee5"><path d="M.5.5h12v11H.5z"/><path d="M1 1h3.500v6H1zM5.500 1H9v6H5.500z" fill="#fff" stroke="none"/></svg></button>
            <span class="ml-[14px] h-px w-2 bg-[#0f4d2a]"></span>
            <div class="relative mx-1 flex h-3 w-[103px] items-center"><input type="range" value="50" aria-label="Zoom" class="h-px w-full appearance-none bg-[#9cc8ae] opacity-90 [&::-webkit-slider-thumb]:h-[6px] [&::-webkit-slider-thumb]:w-[3px] [&::-webkit-slider-thumb]:appearance-none [&::-webkit-slider-thumb]:bg-[#d6eadd]"></div>
            <svg class="size-2" viewBox="0 0 8 8"><path d="M4 1v6M1 4h6" stroke="#0f4d2a" stroke-width="1.500"/></svg>
            <span class="ml-[14px] text-[11px] text-[#8fc0a4]">100%</span>
        </div>
    </footer>

    <!-- Taskbar -->
    <footer class="flex h-[42px] shrink-0 items-center bg-linear-to-r from-[#22353c] via-[#203042] to-[#1a2041] text-white">
        <button class="flex w-[50px] justify-center" aria-label="Start"><svg class="size-[17px]" viewBox="0 0 17 17" fill="#fff"><path d="M0 2.500l7.500-1v6.500H0zM8.500 1.300L17 0v8H8.500zM0 9h7.500v6.500l-7.500-1zM8.500 9H17v8l-8.500-1.300z"/></svg></button>
        <label class="flex h-full w-[300px] items-center gap-[12px] bg-[#f3f2f2] pl-3 text-[#333]"><svg class="size-[18px]" viewBox="0 0 18 18" fill="none" stroke="#333" stroke-width="1.400"><circle cx="11" cy="6.500" r="5.500"/><path d="M7 10.500L1 17"/></svg><input aria-label="Search" placeholder="Type here to search" class="min-w-0 flex-1 text-[15px] placeholder:text-[#555]"></label>
        <button class="flex w-[53px] justify-center" aria-label="Task view"><svg class="size-[18px]" viewBox="0 0 18 18" fill="none" stroke="#d4dadd" stroke-width="1.300"><path d="M1 1v2.500h11V1M1 17v-2.500h11V17M1 5.500h11v7H1zM16 1v3M16 7v3M16 13v4"/></svg></button>
        <div class="grid h-full w-[516px] grid-cols-10">
            <button class="flex items-center justify-center" aria-label="Edge"><svg class="size-[26px]" viewBox="0 0 26 26"><circle cx="13" cy="13" r="12.500" fill="#1476c8"/><path d="M1 11C3-2 24-3 25.500 12c0 5-5 6-9 4 3-4-1-8-5-8-5 0-9 3-10.500 6z" fill="#38c5c9"/><path d="M13 .5C20 .5 25.500 6 25.500 12c0 5-5 6-9 4 2-3 0-6-2-7z" fill="#67cf5d"/><path d="M9 12c-3 7 3 13 10 12-9 4-18-1-18-11 2-5 10-6 12-3-2 0-3 1-4 2z" fill="#174fa0"/><path d="M15 11c2 2 0 4 1.500 5.500 2 2 6 1.500 8 .5-3 4-12 3-12-3 0-2 1-3 2.500-3z" fill="#20333c"/></svg></button>
            <button class="flex items-center justify-center" aria-label="Visual Studio 2012"><svg class="size-6" viewBox="0 0 24 24"><path d="M1 6l4-2 6 5 7-8 5 2v18l-5 2-7-7-6 4-4-2z" fill="#68217a"/><path d="M4 8.500v7l5-3.500zM9 12l9-6.500v13z" fill="none" stroke="#fff" stroke-width="2.600" stroke-linejoin="round"/></svg></button>
            <button class="flex items-center justify-center border-b-3 border-[#76b9ed] pt-[3px] mx-1" aria-label="Visual Studio"><svg class="size-6" viewBox="0 0 24 24"><path d="M1 7l3-1 14 12v5L1 10z" fill="#7752b8"/><path d="M1 17l3 1L18 6V1L1 14z" fill="#5e3ba5"/><path d="M17 0l6 3v18l-6 3z" fill="#a179ec"/></svg></button>
            <button class="flex items-center justify-center" aria-label="Store"><svg class="size-[26px]" viewBox="0 0 26 26"><path d="M8 6V2h10v4" fill="none" stroke="#35bde0" stroke-width="1.800"/><path d="M1 5h24v17q0 3-3 3H4q-3 0-3-3z" fill="#f5f7f8"/><path d="M8 10h4.500v4.500H8z" fill="#e74b2c"/><path d="M13.500 10H18v4.500h-4.500z" fill="#7fb932"/><path d="M8 15.500h4.500V20H8z" fill="#2d9cdb"/><path d="M13.500 15.500H18V20h-4.500z" fill="#f6b71d"/></svg></button>
            <button class="flex items-center justify-center border-b-3 border-[#76b9ed] pt-[3px] mx-1" aria-label="Chrome"><svg class="size-[25px]" viewBox="0 0 25 25"><circle cx="12.500" cy="12.500" r="12" fill="#f7cb35"/><path d="M2 6.500A12 12 0 0 1 23 6.500H12.500L7 15.500z" fill="#e04233"/><path d="M2 6.500l5.500 9 5 3L10 24A12 12 0 0 1 2 6.500z" fill="#38a552"/><circle cx="12.500" cy="12.500" r="6" fill="#fff"/><circle cx="12.500" cy="12.500" r="4.500" fill="#337de2"/></svg></button>
            <button class="flex items-center justify-center border-b-3 border-[#76b9ed] pt-[3px] mx-1" aria-label="Tools"><svg class="size-6" viewBox="0 0 24 24"><path d="M3 3q5-3 11 0v12l-5-2-6 1z" fill="#f3c431"/><path d="M10 13h4v4h-4z" fill="#e3a71c"/><path d="M17 2h5v5M1 18v5h6" fill="none" stroke="#4d8b74" stroke-width="2"/><path d="M17 12v10M12 17h10M13.500 13.500l7 7M20.500 13.500l-7 7" stroke="#2368a0" stroke-width="1.800"/></svg></button>
            <button class="flex items-center justify-center border-b-3 border-[#76b9ed] pt-[3px] mx-1" aria-label="File Explorer"><svg class="size-6" viewBox="0 0 24 24"><path d="M1 3h8l2 2h11v4H1z" fill="#e2a72e"/><path d="M1 7h22v14H1z" fill="#f8d568"/><path d="M5 22v-8q0-1 1-1h12q1 0 1 1v8h-4v-4H9v4z" fill="#3c8fd0"/></svg></button>
            <button class="flex items-center justify-center" aria-label="Mail"><svg class="size-[26px]" viewBox="0 0 26 26"><path d="M0 9L13 1l13 8z" fill="#1569a8"/><path d="M0 9h26v15H0z" fill="#2c9ce0"/><path d="M1 8h24L13 18z" fill="#f4f8fb"/><path d="M0 24l13-9 13 9z" fill="#4bb9ef"/></svg></button>
            <button class="flex items-center justify-center border-b-3 border-[#76b9ed] pt-[3px] mx-1" aria-label="Notepad"><svg class="size-6" viewBox="0 0 24 24"><path d="M8 2h14l-5 18H2z" fill="#a9c6cd"/><path d="M9 5h11l-3 12H5z" fill="#6fa7b3"/><path d="M14 5h6l-3 12z" fill="#d3e2e6"/><path d="M2 20h15l5-18 1 2-5 18H3z" fill="#e8eef0"/></svg></button>
            <button class="flex items-center justify-center border-b-3 border-[#76b9ed] bg-[#4a5b68] pt-[3px]" aria-label="Excel"><svg class="h-[18px] w-[19px]" viewBox="0 0 19 18"><path d="M0 2l10-2v18L0 16z" fill="#1e7145"/><path d="M11 2h7v14h-7" fill="#1e7145" stroke="#fff" stroke-width="1.300"/><path d="M11 5h6M11 8h6M11 11h6M11 14h6M14.500 3v12" stroke="#fff" stroke-width=".8"/><path d="M2 5.500l5.500 7M7.500 5.500L2 12.500" stroke="#fff" stroke-width="1.700"/></svg></button>
        </div>
        <div class="ml-auto flex h-full items-center">
            <svg class="h-6 w-5" viewBox="0 0 20 24"><path d="M3 3q3-4 6 0v12a5 5 0 1 1-6 0z" fill="#c6e0f5"/><circle cx="6" cy="18.500" r="3.300" fill="#2686d9"/><path d="M6 8v10" stroke="#8aa" stroke-width="2"/><path d="M12 3h7M15.500 19V7M12 10.500L15.500 7l3.500 3.500" fill="none" stroke="#e23a3a" stroke-width="2"/></svg>
            <span class="ml-[10px] text-sm">Near record</span>
            <svg class="ml-[25px] h-4 w-[15px]" viewBox="0 0 15 16"><path d="M1 11l6.500-6.500L14 11" fill="none" stroke="#d8dbe2" stroke-width="1.500"/></svg>
            <svg class="ml-[9px] h-[11px] w-[17px]" viewBox="0 0 17 11"><path d="M.5.500h14v10H.5z" fill="none" stroke="#fff"/><path d="M2 2h7v7H2zM11 2h2v7h-2zM15 3.500h2v4h-2z" fill="#fff"/></svg>
            <svg class="ml-[9px] size-[15px]" viewBox="0 0 15 15" fill="none" stroke="#cfd4dc" stroke-width="1.300"><path d="M1 14C1 7 7 1 14 1M4.500 14c0-5 4.500-9.500 9.500-9.500M8 14c0-3 3-6 6-6"/><circle cx="12.500" cy="12.500" r="1.300" fill="#cfd4dc"/></svg>
            <time class="ml-3 text-center text-xs leading-[19px]">10:29 AM<br>19-06-2023</time>
            <div class="relative mr-4 ml-[18px]"><svg class="h-[26px] w-[28px]" viewBox="0 0 28 26"><path d="M1 3h17v14H9l-4 4v-4H1z" fill="#fff"/><path d="M4 7h11M4 10h11M4 13h8" stroke="#1c2442" stroke-width="1.200"/><circle cx="18" cy="18" r="7.500" fill="#3a3d4a" stroke="#777"/></svg><span class="absolute right-[7px] bottom-0 text-[11px] leading-4 font-bold">2</span></div>
        </div>
    </footer>
</body>
</html>
